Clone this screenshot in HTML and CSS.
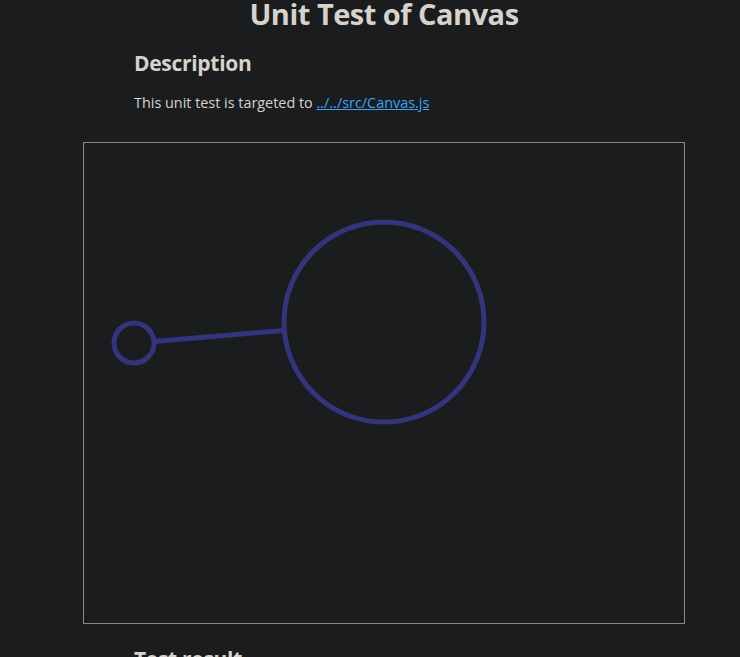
FILE: index.html
```html
<!DOCTYPE html>
<html>
<head>
<meta charset="utf-8">
<link rel="stylesheet" href="styles.css">
</head>
<body>
<div class="page">
  <h1 class="title">Unit Test of Canvas</h1>
  <section class="section">
    <h2 class="heading">Description</h2>
    <p class="text">This unit test is targeted to <a class="link" href="#">../../src/Canvas.js</a></p>
  </section>
  <div class="canvas">
    <svg width="600" height="480" viewBox="0 0 600 480">
      <circle cx="300" cy="179" r="100" fill="none" stroke="#34347c" stroke-width="5"/>
      <circle cx="50" cy="200" r="20" fill="none" stroke="#34347c" stroke-width="5"/>
      <line x1="70" y1="198.4" x2="200" y2="187.5" stroke="#34347c" stroke-width="5"/>
    </svg>
  </div>
  <section class="section">
    <h2 class="heading">Test result</h2>
  </section>
</div>
</body>
</html>
```
FILE: styles.css
```css
html, body {
  margin: 0;
  padding: 0;
  background: #1b1c1e;
}
body {
  font-family: "Open Sans", "Noto Sans", sans-serif;
  color: #d6d2cc;
}
.page {
  width: 602px;
  margin-left: 83px;
}
.title {
  margin: 0;
  text-align: center;
  font-size: 29px;
  line-height: 28px;
  font-weight: 700;
  letter-spacing: -0.5px;
}
.section {
  padding-left: 51px;
}
.heading {
  margin: 0;
  padding-top: 21px;
  font-size: 21px;
  line-height: 28px;
  font-weight: 700;
  letter-spacing: -0.3px;
}
.text {
  margin: 16px 0 0;
  font-size: 14.4px;
  line-height: 20px;
}
.link {
  color: #3ea3f5;
}
.canvas {
  margin-top: 29px;
  border: 1px solid #8f877c;
  width: 600px;
  height: 480px;
}
.canvas svg {
  display: block;
}
```
